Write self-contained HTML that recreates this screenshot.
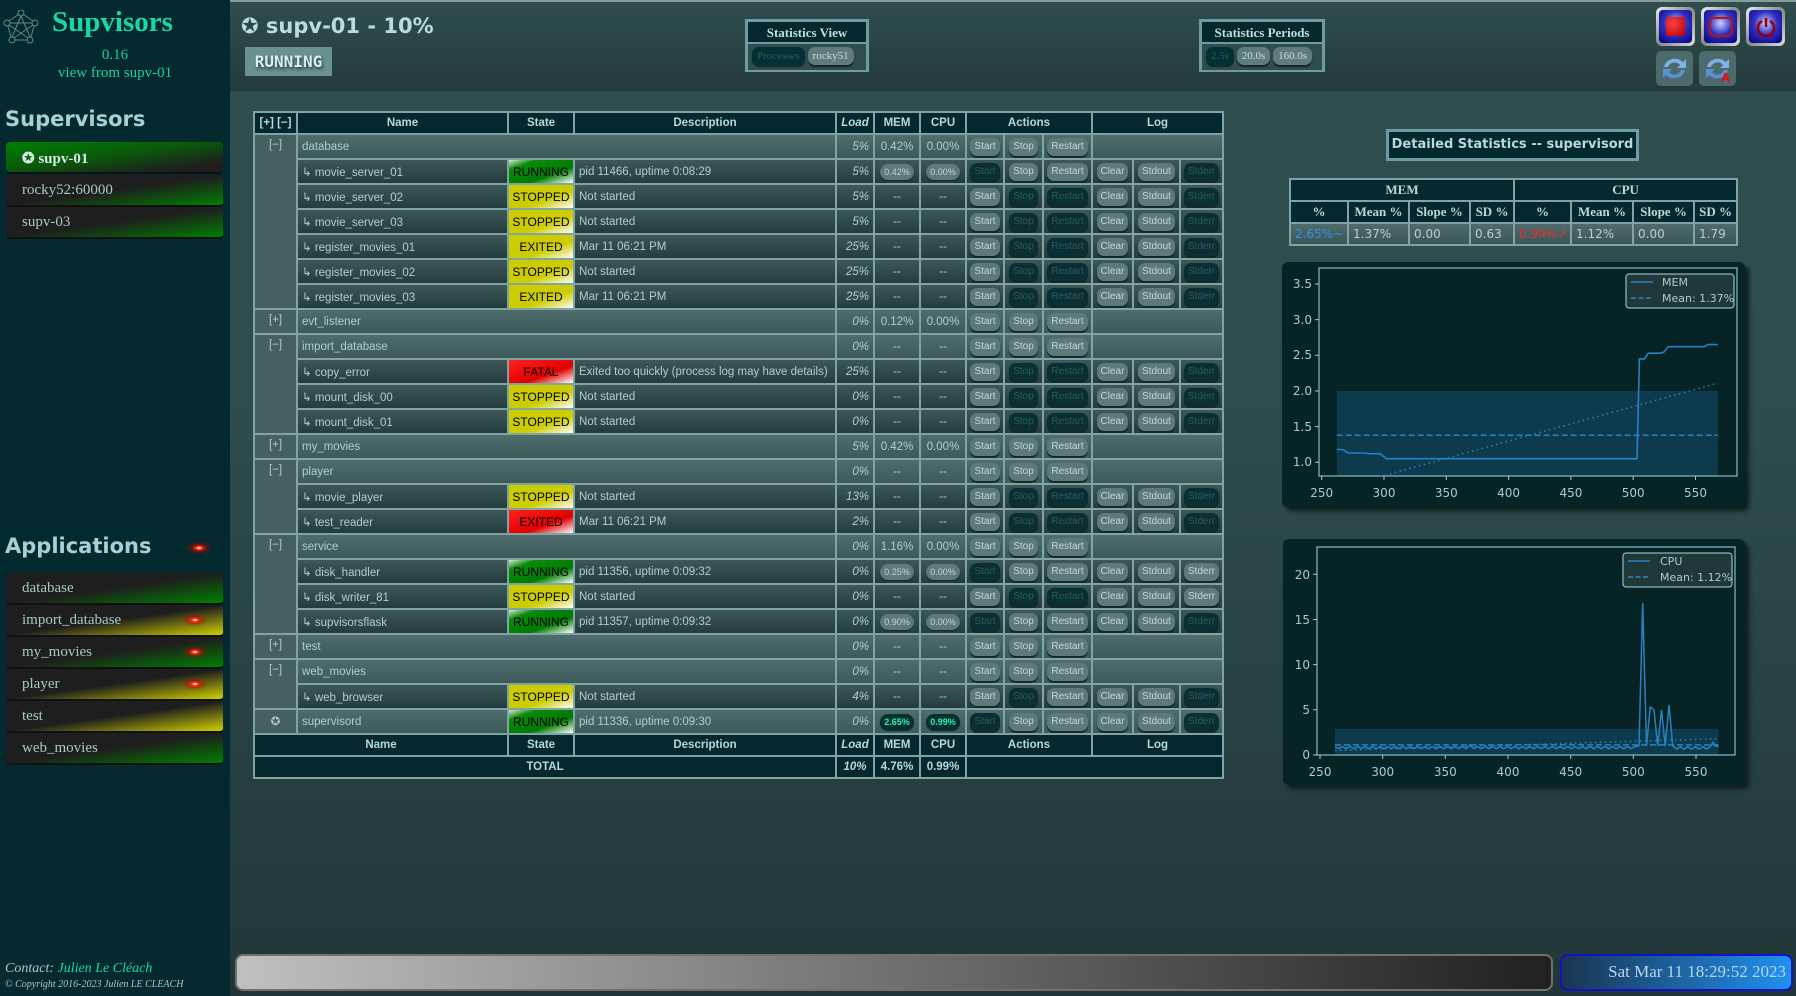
<!DOCTYPE html>
<html><head><meta charset="utf-8">
<style>
*{box-sizing:border-box;margin:0;padding:0}
body{width:1796px;height:996px;overflow:hidden;background:#2a4545;font-family:"Liberation Sans","DejaVu Sans",sans-serif;position:relative}
#side{position:absolute;left:0;top:0;width:230px;height:996px;background:#042a2f}
#main{position:absolute;left:230px;top:0;width:1566px;height:996px;background:linear-gradient(#2f4f4f 0,#2e4d4d 400px,#223637 996px)}
#hdr{position:absolute;left:230px;top:0;width:1566px;height:91px;background:linear-gradient(#2f4e4e,#243a3b);border-top:2px solid #8a9a9a}
.abs{position:absolute}
.title{left:52px;top:6px;font:bold 29px "Liberation Serif",serif;color:#18d8a8}
.ver{left:0;width:230px;text-align:center;font:15px "Liberation Serif",serif;color:#18d0a0}
h2{position:absolute;left:5px;font:bold 21px "DejaVu Sans",sans-serif;color:#a8d0d8}
.si{position:absolute;left:6px;width:217px;height:32px;border-radius:4px;font:15px "Liberation Serif",serif;color:#a8c8c8;padding:7px 0 0 16px;border-bottom:2px solid #111}
.g{background:linear-gradient(to bottom right,#1e1e1e 50%,#008000 100%)}
.y{background:linear-gradient(to bottom right,#1e1e1e 50%,#d0d000 100%)}
.led{position:absolute;width:40px;height:30px;background:radial-gradient(ellipse 14px 7px at 50% 50%,#fff 0,#ff2000 25%,rgba(200,0,0,.4) 50%,transparent 100%)}
table.t{position:absolute;left:253px;top:111px;width:969px;border-collapse:collapse;table-layout:fixed;font-size:11.5px;color:#b0cece}
.t td,.t th{border:2px solid #7fa4a4;padding:0 4px;white-space:nowrap;overflow:hidden}
.t th{background:#03292e;color:#b8d8d8;font-weight:bold;text-align:center;height:22px}
.t tr.a td{background:linear-gradient(#4f6d6d,#3e5a5a);height:25px}
.t tr.p td{background:linear-gradient(#3d5858,#243c3d);height:25px}
.t td.x{background:#465f60 !important;text-align:center;vertical-align:top;padding-top:4px;color:#b0cccc}
.t td.c{text-align:center;padding:0}
.t td.r{text-align:right;font-style:italic}
.t td.st{color:#000;text-align:center;padding:0;font-size:12px}
.run{background:linear-gradient(to bottom right,#d8e8d8 0,#0a8a0a 22%,#007a00 65%,#fff 100%) !important}
.sto{background:linear-gradient(to bottom right,#cccc00 0,#cccc00 62%,#fff 100%) !important}
.ex{background:linear-gradient(to bottom right,#cccc00 0,#cccc00 62%,#fff 100%) !important}
.fa{background:linear-gradient(to bottom right,#ff2020 0,#e00000 62%,#fff 100%) !important}
.b{display:inline-block;height:18px;line-height:18px;border-radius:7px;font-size:10px;padding:0 4px;background:#5d7979;color:#c2d8d8;box-shadow:0 2px 1px #142626}
.b.d{background:#0b3034;color:#2f5858}
.pl{display:inline-block;height:16px;line-height:16px;border-radius:8px;font-size:9px;padding:0 4px;background:#5d7979;color:#c2d8d8;box-shadow:0 1px 1px #142626}
.pl.k{background:#053030;color:#30f0b0;font-weight:bold}
.t tr.f td{background:#03292e;height:22px;text-align:center;font-weight:bold;color:#b8d8d8}
.box{position:absolute;border:3px solid #6f9c9c;background:#03292e}
.box .h{font:bold 13px "Liberation Serif",serif;color:#c0dede;text-align:center;height:22px;line-height:22px;border-bottom:2px solid #6f9c9c}
.box .bb{background:#2f4d4d;height:26px;padding:3px 4px;font:11px "Liberation Serif",serif}
.sb{display:inline-block;height:18px;line-height:18px;border-radius:7px;padding:0 5px;background:#5f7b7b;color:#c8dede;box-shadow:0 2px 1px #142626}
.sb.d{background:#053034;color:#2d5a5a}
table.s{position:absolute;left:1289px;top:178px;width:447px;border-collapse:collapse;table-layout:fixed}
.s td,.s th{border:2px solid #7fa4a4;height:22px}
.s th{background:#03292e;color:#b8d8d8;font:bold 13px "Liberation Serif",serif}
.s td{background:linear-gradient(#4f6b6b,#3a5656);color:#b8d0d0;font:12px "DejaVu Sans",sans-serif;padding-left:4px}
.chart{position:absolute;background:#062326;border-radius:6px;box-shadow:4px 4px 5px #101c1c}
.chart text{font:12px "DejaVu Sans",sans-serif;fill:#a8ccd0}
.ib{position:absolute;width:39px;height:39px;border-radius:6px;background:linear-gradient(135deg,#eee,#888 50%,#ddd);padding:3px}
.ib div{width:100%;height:100%;border-radius:4px;background:radial-gradient(circle at 50% 40%,#c8d0ff 0,#3030c0 45%,#000080 100%)}
.rb{position:absolute;width:37px;height:35px;border-radius:5px;background:#4d6b6b}
</style></head><body>
<div id="side"></div>
<div id="main"></div>
<div id="hdr"></div>

<svg class="abs" style="left:3px;top:10px" width="36" height="34" viewBox="0 0 36 34"><g stroke="#5a8a90" fill="none" stroke-width="1"><circle cx="18" cy="3" r="3"/><circle cx="4" cy="13" r="3"/><circle cx="32" cy="13" r="3"/><circle cx="9" cy="30" r="3"/><circle cx="27" cy="30" r="3"/><path d="M18 6 L9 27 M18 6 L27 27 M7 13 L29 13 M6 15 L25 28 M30 15 L11 28 M16 4 L6 11 M20 4 L30 11 M5 16 L8 27 M31 16 L28 27 M12 30 L24 30"/></g></svg>
<div class="abs title">Supvisors</div>
<div class="abs ver" style="top:47px">0.16</div>
<div class="abs ver" style="top:65px">view from supv-01</div>

<h2 style="top:107px">Supervisors</h2>
<div class="si" style="top:142px;background:linear-gradient(to bottom right,#008000 0,#0a5a0a 45%,#1e1e1e 85%);font-weight:bold;color:#d8e8e8">✪ supv-01</div>
<div class="si g" style="top:175px">rocky52:60000</div>
<div class="si g" style="top:207px">supv-03</div>

<h2 style="top:534px">Applications</h2>
<div class="led" style="left:179px;top:533px"></div>
<div class="si g" style="top:573px">database</div>
<div class="si y" style="top:605px">import_database</div>
<div class="si g" style="top:637px">my_movies</div>
<div class="si y" style="top:669px">player</div>
<div class="si y" style="top:701px">test</div>
<div class="si g" style="top:733px">web_movies</div>
<div class="led" style="left:175px;top:605px"></div>
<div class="led" style="left:175px;top:637px"></div>
<div class="led" style="left:175px;top:669px"></div>

<div class="abs" style="left:5px;top:961px;font:italic 14px 'Liberation Serif',serif;color:#a8c8c8">Contact: <span style="color:#18d8a8">Julien Le Cléach</span></div>
<div class="abs" style="left:5px;top:979px;font:italic 10px 'Liberation Serif',serif;color:#a8c8c8">© Copyright 2016-2023 Julien LE CLEACH</div>

<div class="abs" style="left:241px;top:14px;font:bold 21px 'DejaVu Sans',sans-serif;color:#b8dce0">✪ supv-01 - 10%</div>
<div class="abs" style="left:245px;top:47px;width:87px;height:29px;background:#6a9090;font:bold 16px 'DejaVu Sans Mono','Liberation Mono',monospace;color:#d8eeee;text-align:center;line-height:29px;text-shadow:1px 2px 3px #233">RUNNING</div>

<div class="box" style="left:745px;top:19px;width:124px;height:53px"><div class="h">Statistics View</div><div class="bb"><span class="sb d">Processes</span> <span class="sb">rocky51</span></div></div>
<div class="box" style="left:1199px;top:19px;width:126px;height:53px"><div class="h">Statistics Periods</div><div class="bb"><span class="sb d">2.5s</span> <span class="sb">20.0s</span> <span class="sb">160.0s</span></div></div>

<div class="ib" style="left:1656px;top:7px"><div style="display:flex;align-items:center;justify-content:center"><span style="width:19px;height:19px;background:radial-gradient(circle at 35% 35%,#ff4040,#b00000);border-radius:2px"></span></div></div>
<div class="ib" style="left:1701px;top:7px"><div style="display:flex;align-items:center;justify-content:center"><span style="width:24px;height:20px;border:2px solid #c01010;border-radius:5px"></span></div></div>
<div class="ib" style="left:1746px;top:7px"><div style="display:flex;align-items:center;justify-content:center"><svg width="22" height="22"><path d="M7 5 A8 8 0 1 0 15 5" stroke="#900" stroke-width="2.5" fill="none"/><path d="M11 2 V11" stroke="#900" stroke-width="2.5"/></svg></div></div>
<div class="rb" style="left:1656px;top:51px"><svg width="37" height="35"><path d="M8 16 A11 10 0 0 1 27 11 L30 8 L30 17 L21 17 L24 14 A7 7 0 0 0 12 16Z" fill="#7fb0e8"/><path d="M29 19 A11 10 0 0 1 10 24 L7 27 L7 18 L16 18 L13 21 A7 7 0 0 0 25 19Z" fill="#5a90d8"/></svg></div>
<div class="rb" style="left:1699px;top:51px"><svg width="37" height="35"><path d="M8 16 A11 10 0 0 1 27 11 L30 8 L30 17 L21 17 L24 14 A7 7 0 0 0 12 16Z" fill="#7fb0e8"/><path d="M29 19 A11 10 0 0 1 10 24 L7 27 L7 18 L16 18 L13 21 A7 7 0 0 0 25 19Z" fill="#5a90d8"/><text x="22" y="31" font-family="Liberation Sans" font-weight="bold" font-size="13" fill="#f00">A</text></svg></div>

<table class="t">
<colgroup><col style="width:43px"><col style="width:211px"><col style="width:66px"><col style="width:262px"><col style="width:38px"><col style="width:46px"><col style="width:46px"><col style="width:38px"><col style="width:39px"><col style="width:49px"><col style="width:41px"><col style="width:47px"><col style="width:43px"></colgroup>
<tr><th>[+] [−]</th><th>Name</th><th>State</th><th>Description</th><th><i>Load</i></th><th>MEM</th><th>CPU</th><th colspan="3">Actions</th><th colspan="3">Log</th></tr>

<tr class="a"><td class="x" rowspan="7">[−]</td><td colspan="3">database</td><td class="r">5%</td><td class="c">0.42%</td><td class="c">0.00%</td><td class="c"><span class="b">Start</span></td><td class="c"><span class="b">Stop</span></td><td class="c"><span class="b">Restart</span></td><td colspan="3"></td></tr>
<tr class="p"><td>↳ movie_server_01</td><td class="st run">RUNNING</td><td>pid 11466, uptime 0:08:29</td><td class="r">5%</td><td class="c"><span class="pl">0.42%</span></td><td class="c"><span class="pl">0.00%</span></td><td class="c"><span class="b d">Start</span></td><td class="c"><span class="b">Stop</span></td><td class="c"><span class="b">Restart</span></td><td class="c"><span class="b">Clear</span></td><td class="c"><span class="b">Stdout</span></td><td class="c"><span class="b d">Stderr</span></td></tr>
<tr class="p"><td>↳ movie_server_02</td><td class="st sto">STOPPED</td><td>Not started</td><td class="r">5%</td><td class="c">--</td><td class="c">--</td><td class="c"><span class="b">Start</span></td><td class="c"><span class="b d">Stop</span></td><td class="c"><span class="b d">Restart</span></td><td class="c"><span class="b">Clear</span></td><td class="c"><span class="b">Stdout</span></td><td class="c"><span class="b d">Stderr</span></td></tr>
<tr class="p"><td>↳ movie_server_03</td><td class="st sto">STOPPED</td><td>Not started</td><td class="r">5%</td><td class="c">--</td><td class="c">--</td><td class="c"><span class="b">Start</span></td><td class="c"><span class="b d">Stop</span></td><td class="c"><span class="b d">Restart</span></td><td class="c"><span class="b">Clear</span></td><td class="c"><span class="b">Stdout</span></td><td class="c"><span class="b d">Stderr</span></td></tr>
<tr class="p"><td>↳ register_movies_01</td><td class="st ex">EXITED</td><td>Mar 11 06:21 PM</td><td class="r">25%</td><td class="c">--</td><td class="c">--</td><td class="c"><span class="b">Start</span></td><td class="c"><span class="b d">Stop</span></td><td class="c"><span class="b d">Restart</span></td><td class="c"><span class="b">Clear</span></td><td class="c"><span class="b">Stdout</span></td><td class="c"><span class="b d">Stderr</span></td></tr>
<tr class="p"><td>↳ register_movies_02</td><td class="st sto">STOPPED</td><td>Not started</td><td class="r">25%</td><td class="c">--</td><td class="c">--</td><td class="c"><span class="b">Start</span></td><td class="c"><span class="b d">Stop</span></td><td class="c"><span class="b d">Restart</span></td><td class="c"><span class="b">Clear</span></td><td class="c"><span class="b">Stdout</span></td><td class="c"><span class="b d">Stderr</span></td></tr>
<tr class="p"><td>↳ register_movies_03</td><td class="st ex">EXITED</td><td>Mar 11 06:21 PM</td><td class="r">25%</td><td class="c">--</td><td class="c">--</td><td class="c"><span class="b">Start</span></td><td class="c"><span class="b d">Stop</span></td><td class="c"><span class="b d">Restart</span></td><td class="c"><span class="b">Clear</span></td><td class="c"><span class="b">Stdout</span></td><td class="c"><span class="b d">Stderr</span></td></tr>

<tr class="a"><td class="x">[+]</td><td colspan="3">evt_listener</td><td class="r">0%</td><td class="c">0.12%</td><td class="c">0.00%</td><td class="c"><span class="b">Start</span></td><td class="c"><span class="b">Stop</span></td><td class="c"><span class="b">Restart</span></td><td colspan="3"></td></tr>

<tr class="a"><td class="x" rowspan="4">[−]</td><td colspan="3">import_database</td><td class="r">0%</td><td class="c">--</td><td class="c">--</td><td class="c"><span class="b">Start</span></td><td class="c"><span class="b">Stop</span></td><td class="c"><span class="b">Restart</span></td><td colspan="3"></td></tr>
<tr class="p"><td>↳ copy_error</td><td class="st fa">FATAL</td><td>Exited too quickly (process log may have details)</td><td class="r">25%</td><td class="c">--</td><td class="c">--</td><td class="c"><span class="b">Start</span></td><td class="c"><span class="b d">Stop</span></td><td class="c"><span class="b d">Restart</span></td><td class="c"><span class="b">Clear</span></td><td class="c"><span class="b">Stdout</span></td><td class="c"><span class="b d">Stderr</span></td></tr>
<tr class="p"><td>↳ mount_disk_00</td><td class="st sto">STOPPED</td><td>Not started</td><td class="r">0%</td><td class="c">--</td><td class="c">--</td><td class="c"><span class="b">Start</span></td><td class="c"><span class="b d">Stop</span></td><td class="c"><span class="b d">Restart</span></td><td class="c"><span class="b">Clear</span></td><td class="c"><span class="b">Stdout</span></td><td class="c"><span class="b d">Stderr</span></td></tr>
<tr class="p"><td>↳ mount_disk_01</td><td class="st sto">STOPPED</td><td>Not started</td><td class="r">0%</td><td class="c">--</td><td class="c">--</td><td class="c"><span class="b">Start</span></td><td class="c"><span class="b d">Stop</span></td><td class="c"><span class="b d">Restart</span></td><td class="c"><span class="b">Clear</span></td><td class="c"><span class="b">Stdout</span></td><td class="c"><span class="b d">Stderr</span></td></tr>

<tr class="a"><td class="x">[+]</td><td colspan="3">my_movies</td><td class="r">5%</td><td class="c">0.42%</td><td class="c">0.00%</td><td class="c"><span class="b">Start</span></td><td class="c"><span class="b">Stop</span></td><td class="c"><span class="b">Restart</span></td><td colspan="3"></td></tr>

<tr class="a"><td class="x" rowspan="3">[−]</td><td colspan="3">player</td><td class="r">0%</td><td class="c">--</td><td class="c">--</td><td class="c"><span class="b">Start</span></td><td class="c"><span class="b">Stop</span></td><td class="c"><span class="b">Restart</span></td><td colspan="3"></td></tr>
<tr class="p"><td>↳ movie_player</td><td class="st sto">STOPPED</td><td>Not started</td><td class="r">13%</td><td class="c">--</td><td class="c">--</td><td class="c"><span class="b">Start</span></td><td class="c"><span class="b d">Stop</span></td><td class="c"><span class="b d">Restart</span></td><td class="c"><span class="b">Clear</span></td><td class="c"><span class="b">Stdout</span></td><td class="c"><span class="b d">Stderr</span></td></tr>
<tr class="p"><td>↳ test_reader</td><td class="st fa">EXITED</td><td>Mar 11 06:21 PM</td><td class="r">2%</td><td class="c">--</td><td class="c">--</td><td class="c"><span class="b">Start</span></td><td class="c"><span class="b d">Stop</span></td><td class="c"><span class="b d">Restart</span></td><td class="c"><span class="b">Clear</span></td><td class="c"><span class="b">Stdout</span></td><td class="c"><span class="b d">Stderr</span></td></tr>

<tr class="a"><td class="x" rowspan="4">[−]</td><td colspan="3">service</td><td class="r">0%</td><td class="c">1.16%</td><td class="c">0.00%</td><td class="c"><span class="b">Start</span></td><td class="c"><span class="b">Stop</span></td><td class="c"><span class="b">Restart</span></td><td colspan="3"></td></tr>
<tr class="p"><td>↳ disk_handler</td><td class="st run">RUNNING</td><td>pid 11356, uptime 0:09:32</td><td class="r">0%</td><td class="c"><span class="pl">0.25%</span></td><td class="c"><span class="pl">0.00%</span></td><td class="c"><span class="b d">Start</span></td><td class="c"><span class="b">Stop</span></td><td class="c"><span class="b">Restart</span></td><td class="c"><span class="b">Clear</span></td><td class="c"><span class="b">Stdout</span></td><td class="c"><span class="b">Stderr</span></td></tr>
<tr class="p"><td>↳ disk_writer_81</td><td class="st sto">STOPPED</td><td>Not started</td><td class="r">0%</td><td class="c">--</td><td class="c">--</td><td class="c"><span class="b">Start</span></td><td class="c"><span class="b d">Stop</span></td><td class="c"><span class="b d">Restart</span></td><td class="c"><span class="b">Clear</span></td><td class="c"><span class="b">Stdout</span></td><td class="c"><span class="b">Stderr</span></td></tr>
<tr class="p"><td>↳ supvisorsflask</td><td class="st run">RUNNING</td><td>pid 11357, uptime 0:09:32</td><td class="r">0%</td><td class="c"><span class="pl">0.90%</span></td><td class="c"><span class="pl">0.00%</span></td><td class="c"><span class="b d">Start</span></td><td class="c"><span class="b">Stop</span></td><td class="c"><span class="b">Restart</span></td><td class="c"><span class="b">Clear</span></td><td class="c"><span class="b">Stdout</span></td><td class="c"><span class="b d">Stderr</span></td></tr>

<tr class="a"><td class="x">[+]</td><td colspan="3">test</td><td class="r">0%</td><td class="c">--</td><td class="c">--</td><td class="c"><span class="b">Start</span></td><td class="c"><span class="b">Stop</span></td><td class="c"><span class="b">Restart</span></td><td colspan="3"></td></tr>

<tr class="a"><td class="x" rowspan="2">[−]</td><td colspan="3">web_movies</td><td class="r">0%</td><td class="c">--</td><td class="c">--</td><td class="c"><span class="b">Start</span></td><td class="c"><span class="b">Stop</span></td><td class="c"><span class="b">Restart</span></td><td colspan="3"></td></tr>
<tr class="p"><td>↳ web_browser</td><td class="st sto">STOPPED</td><td>Not started</td><td class="r">4%</td><td class="c">--</td><td class="c">--</td><td class="c"><span class="b">Start</span></td><td class="c"><span class="b d">Stop</span></td><td class="c"><span class="b">Restart</span></td><td class="c"><span class="b">Clear</span></td><td class="c"><span class="b">Stdout</span></td><td class="c"><span class="b d">Stderr</span></td></tr>

<tr class="a"><td class="x">✪</td><td>supervisord</td><td class="st run">RUNNING</td><td>pid 11336, uptime 0:09:30</td><td class="r">0%</td><td class="c"><span class="pl k">2.65%</span></td><td class="c"><span class="pl k">0.99%</span></td><td class="c"><span class="b d">Start</span></td><td class="c"><span class="b">Stop</span></td><td class="c"><span class="b">Restart</span></td><td class="c"><span class="b">Clear</span></td><td class="c"><span class="b">Stdout</span></td><td class="c"><span class="b d">Stderr</span></td></tr>

<tr class="f"><td colspan="2">Name</td><td>State</td><td>Description</td><td><i>Load</i></td><td>MEM</td><td>CPU</td><td colspan="3">Actions</td><td colspan="3">Log</td></tr>
<tr class="f"><td colspan="4">TOTAL</td><td><i>10%</i></td><td>4.76%</td><td>0.99%</td><td colspan="6"></td></tr>
</table>

<div class="abs" style="left:1386px;top:129px;width:253px;height:32px;border:3px solid #6f9c9c;background:#03292e;font:bold 13px 'DejaVu Sans',sans-serif;color:#b8d8dc;text-align:center;line-height:26px">Detailed Statistics -- supervisord</div>

<table class="s">
<colgroup><col style="width:58px"><col style="width:61px"><col style="width:61px"><col style="width:44px"><col style="width:57px"><col style="width:62px"><col style="width:61px"><col style="width:43px"></colgroup>
<tr><th colspan="4">MEM</th><th colspan="4">CPU</th></tr>
<tr><th>%</th><th>Mean %</th><th>Slope %</th><th>SD %</th><th>%</th><th>Mean %</th><th>Slope %</th><th>SD %</th></tr>
<tr><td style="color:#3090f0">2.65%~</td><td>1.37%</td><td>0.00</td><td>0.63</td><td style="color:#e83030">0.99%↗</td><td>1.12%</td><td>0.00</td><td>1.79</td></tr>
</table>

<svg class="chart" style="left:1282px;top:262px" width="463" height="245">
<rect x="54.7" y="129" width="381.2" height="85" fill="#0d3a4c"/>
<rect x="37" y="6" width="418" height="208" fill="none" stroke="#a0d8e0"/>
<g stroke="#a8ccd0"><path d="M37 22h-4M37 57.6h-4M37 93.3h-4M37 129h-4M37 164.6h-4M37 200.3h-4M39.7 214v4M102 214v4M164.3 214v4M226.6 214v4M288.9 214v4M351.2 214v4M413.5 214v4"/></g>
<g text-anchor="end"><text x="30" y="26">3.5</text><text x="30" y="62">3.0</text><text x="30" y="97">2.5</text><text x="30" y="133">2.0</text><text x="30" y="169">1.5</text><text x="30" y="204">1.0</text></g>
<g text-anchor="middle"><text x="39.7" y="235">250</text><text x="102" y="235">300</text><text x="164.3" y="235">350</text><text x="226.6" y="235">400</text><text x="288.9" y="235">450</text><text x="351.2" y="235">500</text><text x="413.5" y="235">550</text></g>
<path d="M54.7 173.2H435.9" stroke="#2a80c0" stroke-width="1.5" stroke-dasharray="6,3"/>
<path d="M98.3 214.6L435.9 121.1" stroke="#2a80c0" stroke-width="1.5" stroke-dasharray="1.5,3.5"/>
<polyline fill="none" stroke="#2a80c0" stroke-width="1.6" points="54.7,187.5 60.9,187.5 64.6,190.3 67.1,191 83.3,191 87,191.7 98.3,191.7 104.5,196.7 355,196.7 357.4,96.9 362.4,96.9 366.2,91.2 378.6,91.2 382.3,89.7 386.1,84.7 422.2,84.7 426,82.6 435.9,82.6"/>
<rect x="344" y="12" width="108" height="34" rx="3" fill="#203838" stroke="#a8d8e0"/>
<path d="M349 20H371" stroke="#2a80c0" stroke-width="1.6"/><path d="M349 36H371" stroke="#2a80c0" stroke-width="1.6" stroke-dasharray="5,2.5"/>
<text x="380" y="24" style="font-size:11px">MEM</text><text x="380" y="40" style="font-size:11px">Mean: 1.37%</text>
</svg>

<svg class="chart" style="left:1283px;top:539px" width="462" height="246">
<rect x="52" y="189.8" width="383.5" height="26.2" fill="#0d3a4c"/>
<rect x="34" y="8" width="418" height="208" fill="none" stroke="#a0d8e0"/>
<g stroke="#a8ccd0"><path d="M34 216h-4M34 170.8h-4M34 125.6h-4M34 80.5h-4M34 35.3h-4M37 216v4M99.7 216v4M162.3 216v4M225 216v4M287.7 216v4M350.3 216v4M413 216v4"/></g>
<g text-anchor="end"><text x="27" y="220">0</text><text x="27" y="175">5</text><text x="27" y="130">10</text><text x="27" y="85">15</text><text x="27" y="40">20</text></g>
<g text-anchor="middle"><text x="37" y="237">250</text><text x="99.7" y="237">300</text><text x="162.3" y="237">350</text><text x="225" y="237">400</text><text x="287.7" y="237">450</text><text x="350.3" y="237">500</text><text x="413" y="237">550</text></g>
<path d="M52 205.9H435.5" stroke="#2a80c0" stroke-width="1.5" stroke-dasharray="6,3"/>
<path d="M52 211.5L435.5 199.7" stroke="#2a80c0" stroke-width="1.5" stroke-dasharray="1.5,3.5"/>
<path fill="none" stroke="#2a80c0" stroke-width="1.5" d="M52 207.5 l3.75,2.2 l3.75,-2.2 l3.75,2.2 l3.75,-2.2 l3.75,2.2 l3.75,-2.2 l3.75,2.2 l3.75,-2.2 l3.75,2.2 l3.75,-2.2 l3.75,2.2 l3.75,-2.2 l3.75,2.2 l3.75,-2.2 l3.75,2.2 l3.75,-2.2 l3.75,2.2 l3.75,-2.2 l3.75,2.2 l3.75,-2.2 l3.75,2.2 l3.75,-2.2 l3.75,2.2 l3.75,-2.2 l3.75,2.2 l3.75,-2.2 l3.75,2.2 l3.75,-2.2 l3.75,2.2 l3.75,-2.2 l3.75,2.2 l3.75,-2.2 l3.75,2.2 l3.75,-2.2 l3.75,2.2 l3.75,-4 l3.75,4 l3.75,-2.2 l3.75,2.2 l3.75,-2.2 l3.75,2.2 l3.75,-2.2 l3.75,2.2 l3.75,-2.2 l3.75,2.2 l3.75,-2.2 l3.75,2.2 l3.75,-2.2 l3.75,2.2 l3.75,-2.2 l3.75,2.2 l3.75,-2.2 l3.75,2.2 l3.75,-2.2 l3.75,2.2 l3.75,-2.2 l3.75,2.2 l3.75,-2.2 l3.75,2.2 l3.75,-2.2 l3.75,2.2 l3.75,-2.2 l3.75,2.2 l3.75,-2.2 l3.75,2.2 l3.75,-2.2 l3.75,2.2 l3.75,-2.2 l3.75,2.2 l3.75,-2.2 l3.75,2.2 l3.75,-2.2 l3.75,2.2 l3.75,-2.2 l3.75,2.2 l3.75,-2.2 l3.75,2.2 l3.75,-2.2 l3.75,2.2 l3.75,-2.2 L356 207 L359.7 64 L363.5 207 L367.2 168 L371 171 L374.7 207 L378.5 171 L382.2 207 L386 166 L389.7 207 L393.5 210 l3.75,-2.2 l3.75,2.2 l3.75,-2.2 l3.75,2.2 l3.75,-2.2 l3.75,2.2 l3.75,-2.2 l3.75,2.2 l3.75,-2.2 L430 203.3 L433 207.5 L435.5 207"/>
<rect x="340" y="14" width="109" height="34" rx="3" fill="#203838" stroke="#a8d8e0"/>
<path d="M345 22H367" stroke="#2a80c0" stroke-width="1.6"/><path d="M345 38H367" stroke="#2a80c0" stroke-width="1.6" stroke-dasharray="5,2.5"/>
<text x="377" y="26" style="font-size:11px">CPU</text><text x="377" y="42" style="font-size:11px">Mean: 1.12%</text>
</svg>

<div class="abs" style="left:235px;top:954px;width:1318px;height:37px;border-radius:8px;border:2px solid #707070;background:linear-gradient(to right,#c0c0c0,#808080 40%,#202020)"></div>
<div class="abs" style="left:1560px;top:954px;width:233px;height:37px;border-radius:8px;border:2px solid #1010d0;background:linear-gradient(to right,#1a3550,#2090f0);font:17px 'Liberation Serif',serif;color:#b8d8e8;text-align:right;padding:6px 5px 0 0">Sat Mar 11 18:29:52 2023</div>
</body></html>
